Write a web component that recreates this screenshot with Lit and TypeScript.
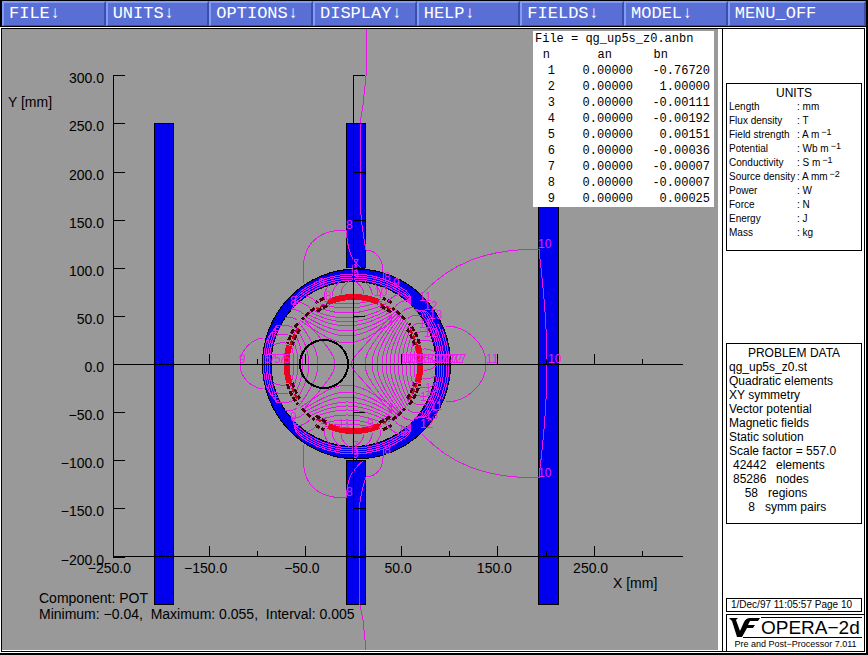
import { LitElement, html, svg, css } from "lit";
import { customElement } from "lit/decorators.js";

const MENUS = ["FILE↓", "UNITS↓", "OPTIONS↓", "DISPLAY↓", "HELP↓", "FIELDS↓", "MODEL↓", "MENU_OFF"];

const HARMONICS: [number, string, string][] = [
  [1, "0.00000", "-0.76720"],
  [2, "0.00000", "1.00000"],
  [3, "0.00000", "-0.00111"],
  [4, "0.00000", "-0.00192"],
  [5, "0.00000", "0.00151"],
  [6, "0.00000", "-0.00036"],
  [7, "0.00000", "-0.00007"],
  [8, "0.00000", "-0.00007"],
  [9, "0.00000", "0.00025"],
];

const UNITS: [string, string, string][] = [
  ["Length", "mm", ""],
  ["Flux density", "T", ""],
  ["Field strength", "A m", "−1"],
  ["Potential", "Wb m", "−1"],
  ["Conductivity", "S m", "−1"],
  ["Source density", "A mm", "−2"],
  ["Power", "W", ""],
  ["Force", "N", ""],
  ["Energy", "J", ""],
  ["Mass", "kg", ""],
];

const PROBLEM = [
  "qg_up5s_z0.st",
  "Quadratic elements",
  "XY symmetry",
  "Vector potential",
  "Magnetic fields",
  "Static solution",
  "Scale factor = 557.0",
];
const COUNTS: [string, string][] = [
  ["42442", "elements"],
  ["85286", "nodes"],
  ["58", "regions"],
  ["8", "symm pairs"],
];

// Centre of the magnet in plot units
const CX = 353.5;
const CY = 364;
const RAD = Math.PI / 180;

const polar = (r: number, deg: number, cx = CX): string =>
  `${(cx + r * Math.cos(deg * RAD)).toFixed(1)} ${(CY - r * Math.sin(deg * RAD)).toFixed(1)}`;

/** Arc from angle a to angle b, drawn on screen counter-clockwise. */
const arc = (r: number, a: number, b: number, cx = CX): string =>
  `M${polar(r, a, cx)}A${r} ${r} 0 ${b - a > 180 ? 1 : 0} 0 ${polar(r, b, cx)}`;

// Distance of each equipotential's vertex from the saddle point
const SADDLE = 347;
const RIGHT = [4, 18, 25, 30, 35, 39, 43, 47, 51, 55, 59, 63, 67];
const LEFT = [12, 29, 38, 44, 49, 53];
const UP = [21, 28, 33, 38, 42, 46, 51, 56, 60];

/** Equipotentials of the quadrupole inside the bore. */
function boreLines(): string {
  let d = "";
  const line = (fn: (t: number) => [number, number]) => {
    for (let t = -76; t <= 76; t += 4) {
      const [x, y] = fn(t);
      d += `${t === -76 ? "M" : "L"}${x.toFixed(1)} ${y.toFixed(1)}`;
    }
  };
  for (const a of RIGHT) line((t) => [SADDLE + Math.hypot(a, t * 0.92), CY + t]);
  for (const a of LEFT) line((t) => [SADDLE - Math.hypot(a, t * 0.92), CY + t]);
  for (const a of UP) {
    line((t) => [SADDLE + t, CY - Math.hypot(a, t * 0.82)]);
    line((t) => [SADDLE + t, CY + Math.hypot(a, t * 0.82)]);
  }
  return d;
}

/** Short curves between the coil and the inner face of the iron. */
function gapLines(): string {
  let d = "";
  const spans: [number, number, number, number][] = [
    [5, 61, 7, -4],
    [68, 82, 7, 7],
    [100, 114, 7, -7],
    [121, 163, 7, 4],
  ];
  for (const [from, to, step, bend] of spans) {
    for (let a = from; a <= to; a += step) {
      for (const s of [1, -1]) {
        d += `M${polar(71, s * a)}Q${polar(77, s * a)} ${polar(83, s * (a + bend))}`;
      }
    }
  }
  return d;
}

/** Flux running round inside the iron yoke. */
function yokeLines(): string {
  let d = "";
  for (let i = 0; i < 4; i++) {
    const r = 84 + i * 2;
    for (const s of [1, -1]) {
      const top = s > 0 ? [54 + i, 130 - i * 3] : [-130 + i * 3, -54 - i];
      d += arc(r, top[0], top[1]);
      d += `M${polar(r, s * (54 + i))}Q${polar(r + 2, s * 50)} ${polar(82, s * (49 - i))}`;
      d += `M${polar(r, s * (130 - i * 3))}Q${polar(r + 2, s * 135)} ${polar(82, s * (138 - i * 2))}`;
      d += `M${polar(r, s * (158 + i * 3))}Q${polar(90, s * (154 + i))} ${polar(82, s * (152 + i * 2))}`;
      d += `M${polar(r, s * (34 - i * 2))}Q${polar(r + 4, s * 38)} ${polar(82, s * (42 - i))}`;
    }
    d += arc(r, -34 + i * 2, 34 - i * 2, 354);
    d += arc(r, 158 + i * 3, 202 - i * 3);
  }
  d += arc(92, -26, 26, 355) + arc(94, -22, 22, 355);
  return d;
}

const EXTERNAL = [
  "M366 29V76L363 105L360 123V200C361 225 364 240 366 250C376 250 383 259 383 272V279",
  "M366 650L363 620L359 600V508C361 495 363 484 366 477C376 477 383 468 383 458V449",
  "M304 283C300 255 308 230 346 230C348 250 350 258 361 268",
  "M304 445C300 475 308 498 346 498C348 478 350 472 364 460",
  "M422 294C450 264 485 249 539 249C542 280 547 310 547 364C547 418 542 448 539 478C485 478 450 464 422 434",
  "M446 326C466 326 486 343 486 364C486 385 466 402 446 402",
  "M263 338C252 339 240 350 240 364C240 378 252 388 263 389",
].join("");

const TAGS: [number, number, string][] = [
  [346, 229, "8"], [346, 496, "8"], [538, 248, "10"], [538, 477, "10"],
  [548, 363, "10"], [486, 363, "11"], [239, 363, "9"],
  [352, 268, "7"], [351, 273, "8"], [352, 279, "9"],
  [352, 450, "7"], [351, 454, "8"], [352, 458, "9"],
  [384, 281, "8"], [393, 287, "9"], [384, 454, "8"], [400, 436, "9"],
  [318, 287, "9"], [290, 305, "8"], [290, 421, "9"],
  [325, 300, "8"], [374, 296, "10"], [367, 428, "9"], [338, 428, "11"],
];
for (let i = 0; i < 5; i++) {
  TAGS.push([419 + (i % 3) * 5, 301 + i * 9, ["11", "12", "13"][i % 3]]);
  TAGS.push([420 + (i % 3) * 5, 428 - i * 9, ["12", "13", "11"][i % 3]]);
}
for (let x = 401; x < 454; x += 4) TAGS.push([x, 363, x % 8 === 1 ? "12" : "17"]);
for (let x = 264; x < 286; x += 5) TAGS.push([x, 363, x % 2 ? "7" : "5"]);

@customElement("field-plot")
class FieldPlot extends LitElement {
  static styles = css`
    :host { display: block; background: #999; }
    svg { display: block; width: 100%; height: auto; shape-rendering: crispEdges; }
    text { font-family: "Liberation Sans", Arial, sans-serif; }
    .label { font-size: 14px; fill: #000; }
    .end { text-anchor: end; }
    .mid { text-anchor: middle; }
    .axis { stroke: #000; fill: none; }
    .bar { fill: #00e; stroke: #000; }
    .iron { fill: #0000f0; stroke: #000; }
    .bore { fill: #999; stroke: #000; }
    .coil { fill: none; stroke: #f00020; stroke-width: 6; }
    .dash { fill: none; stroke: #400010; stroke-width: 3; stroke-dasharray: 5 2; }
    .dashred { fill: none; stroke: #d00020; stroke-width: 2; stroke-dasharray: 5 2; }
    .probe { fill: none; stroke: #000; stroke-width: 2; }
    .flux { fill: none; stroke: #e815e8; }
    .tag { font-size: 12px; fill: #f01cf0; }
  `;

  private axes() {
    let d = "M113.5 75V556.5H683M353.5 75V556.5M113.5 364.5H683";
    for (let v = -200; v <= 300; v += 50) {
      const y = Math.round(364 - v * 0.9625) + 0.5;
      d += `M113 ${y}h12M353 ${y}h12`;
    }
    for (let v = -200; v <= 300; v += 50) {
      const x = Math.round(353 + v * 0.9625) + 0.5;
      const h = v % 100 ? 10 : 5;
      d += `M${x} 556v-${h}M${x} 364v-${h}`;
    }
    return d;
  }

  render() {
    const minus = (v: number) => v.toFixed(1).replace("-", "−");
    const ys = [300, 250, 200, 150, 100, 50, 0, -50, -100, -150, -200];
    const xs = [-250, -150, -50, 50, 150, 250];
    return html`<svg viewBox="2 29 716 621" role="img" aria-label="Vector potential contours">
      <defs><clipPath id="bore"><circle cx=${CX} cy=${CY} r="69"/></clipPath></defs>
      <rect class="bar" x="154.5" y="123.5" width="19" height="481"/>
      <rect class="bar" x="346.5" y="123.5" width="19" height="144"/>
      <rect class="bar" x="346.5" y="460.5" width="19" height="144"/>
      <rect class="bar" x="538.5" y="123.5" width="20" height="481"/>
      <ellipse class="iron" cx="356.5" cy="364" rx="94" ry="95"/>
      <circle class="bore" cx=${CX} cy="364" r="82.5"/>
      <path class="flux" clip-path="url(#bore)" d=${boreLines()}/>
      ${[1, -1].map((s) => {
        const span = (r: number, a: number, b: number) => (s > 0 ? arc(r, a, b) : arc(r, -b, -a));
        return svg`
          <path class="dash" d=${span(69, 17, 36) + span(64, 17, 33) + span(68, 41, 55) + span(72, 58, 66) + span(69, 144, 163) + span(64, 147, 163) + span(68, 125, 139) + span(72, 114, 122)}/>
          <path class="dashred" d=${span(66, 15, 33) + span(66, 147, 165) + span(66, 56, 70) + span(66, 110, 124)}/>
          <path class="coil" d=${span(67, 68, 112) + span(67, -1, 16) + span(67, 164, 181)}/>
          <path class="dash" d=${span(64, 54, 66) + span(64, 114, 126)}/>`;
      })}
      <path class="flux" d=${gapLines() + yokeLines() + EXTERNAL}/>
      ${TAGS.map(([x, y, t]) => svg`<text class="tag" x=${x} y=${y}>${t}</text>`)}
      <path class="axis" d=${this.axes()}/>
      <circle class="probe" cx="324" cy="364" r="24"/>
      ${ys.map((v) => svg`<text class="label end" x="104" y=${372 - v * 0.9625}>${minus(v)}</text>`)}
      ${xs.map((v) => svg`<text class="label mid" x=${350 + v * 0.9625} y="573">${minus(v)}</text>`)}
      <text class="label" x="8" y="107">Y [mm]</text>
      <text class="label" x="613" y="588">X [mm]</text>
      <text class="label" x="39" y="603">Component: POT</text>
      <text class="label" x="39" y="619" xml:space="preserve">Minimum: −0.04,  Maximum: 0.055,  Interval: 0.005</text>
    </svg>`;
  }
}

@customElement("app-root")
class AppRoot extends LitElement {
  static styles = css`
    :host {
      display: flex; flex-direction: column; box-sizing: border-box; min-height: 100vh;
      background: #000; color: #000; font-family: "Liberation Sans", Arial, sans-serif;
      padding-bottom: 2px;
    }
    .menu { display: grid; grid-template-columns: repeat(7, 12%) 1fr; padding: 1px 2px; }
    .menu button {
      height: 25px; padding: 0 0 0 5px; text-align: left; background: #5a6fd6; color: #fff;
      border: 2px solid; border-color: #7f9cf8 #3c4fa8 #3c4fa8 #7f9cf8; border-bottom-width: 1px;
      font: 17px/20px "Liberation Mono", "Courier New", monospace;
    }
    .frame { flex: 1; display: flex; background: #fff; border: 1px solid #fff; margin-right: 2px; }
    .work { flex: 1; min-width: 0; position: relative; border: 1px solid #000; border-right: 0; }
    .plot { margin-right: 4px; }
    .harmonics {
      position: absolute; top: 2px; right: 8px; width: 181px; background: #fff;
      font: 12px/16px "Liberation Mono", "Courier New", monospace;
      border-collapse: collapse; white-space: pre;
    }
    .harmonics caption { text-align: left; background: #fff; padding-left: 2px; }
    .harmonics th { font-weight: normal; }
    .harmonics td, .harmonics th { padding: 0; text-align: right; }
    .harmonics td.bn { padding-right: 4px; }
    .harmonics .n { width: 22px; }
    .harmonics .an { width: 78px; }
    .harmonics th.n { padding-right: 5px; width: 17px; }
    .harmonics th.an { padding-right: 21px; width: 57px; }
    .harmonics th.bn { padding-right: 46px; }
    .side {
      flex: none; width: 138px; display: flex; flex-direction: column;
      border: 1px solid #000; padding-left: 3px;
    }
    .box { border: 1px solid #000; margin-right: 2px; padding: 2px; box-sizing: border-box; }
    .box h2 { margin: 0; font-size: 12px; line-height: 14px; font-weight: normal; text-align: center; }
    .units { margin-top: 54px; height: 168px; }
    .units dl { margin: 0; display: grid; grid-template-columns: 68px 1fr; font-size: 10px; line-height: 14px; white-space: nowrap; }
    dt, dd { margin: 0; height: 14px; }
    sup { font-size: 9px; line-height: 0; margin-left: 2px; vertical-align: 3px; }
    .problem { margin-top: 92px; height: 181px; font-size: 12px; line-height: 14px; }
    .problem p { margin: 0; white-space: nowrap; }
    .problem .count { display: flex; gap: 10px; padding-left: 4px; }
    .num { width: 33px; text-align: right; }
    .count:nth-last-child(2) .num { width: 25px; }
    .count:last-child .num { width: 22px; }
    .date { margin-top: auto; font-size: 10px; line-height: 12px; padding: 0 0 0 4px; white-space: nowrap; }
    .brand { margin-top: 2px; border: solid #000; border-width: 1px 0 0 1px; padding: 2px 2px 0; height: 37px; box-sizing: border-box; }
    .logo { display: flex; height: 21px; }
    .mark { flex: none; width: 32px; height: 21px; }
    .name { flex: 1; border: solid #000; border-width: 1px 0; font-size: 19px; line-height: 20px; white-space: nowrap; }
    .version { font-size: 9px; line-height: 12px; text-align: center; white-space: nowrap; }
  `;

  render() {
    return html`
      <nav class="menu">${MENUS.map((m) => html`<button type="button">${m}</button>`)}</nav>
      <main class="frame">
        <section class="work">
          <field-plot class="plot"></field-plot>
          <table class="harmonics">
            <caption>File = qg_up5s_z0.anbn</caption>
            <thead><tr><th class="n">n</th><th class="an">an</th><th class="bn">bn</th></tr></thead>
            <tbody>${HARMONICS.map(([n, a, b]) => html`<tr><td class="n">${n}</td><td class="an">${a}</td><td class="bn">${b}</td></tr>`)}</tbody>
          </table>
        </section>
        <aside class="side">
          <section class="box units">
            <h2>UNITS</h2>
            <dl>${UNITS.map(([k, v, e]) => html`<dt>${k}</dt><dd>: ${v}${e ? html`<sup>${e}</sup>` : ""}</dd>`)}</dl>
          </section>
          <section class="box problem">
            <h2>PROBLEM DATA</h2>
            ${PROBLEM.map((p) => html`<p>${p}</p>`)}
            ${COUNTS.map(([n, t]) => html`<p class="count"><span class="num">${n}</span><span>${t}</span></p>`)}
          </section>
          <section class="box date">1/Dec/97 11:05:57 Page 10</section>
          <footer class="brand">
            <div class="logo">
              <svg class="mark" viewBox="0 0 32 21" aria-hidden="true">
                <path d="M0 1H9L7 3L11 14L15 5Q17 1 21 1H31L29 4H21L19 8H26L24 11H18L13 20H8L3 4Z"/>
                <path d="M14 20.5H32" stroke="#000"/>
              </svg>
              <span class="name">OPERA−2d</span>
            </div>
            <div class="version">Pre and Post−Processor 7.011</div>
          </footer>
        </aside>
      </main>
    `;
  }
}
